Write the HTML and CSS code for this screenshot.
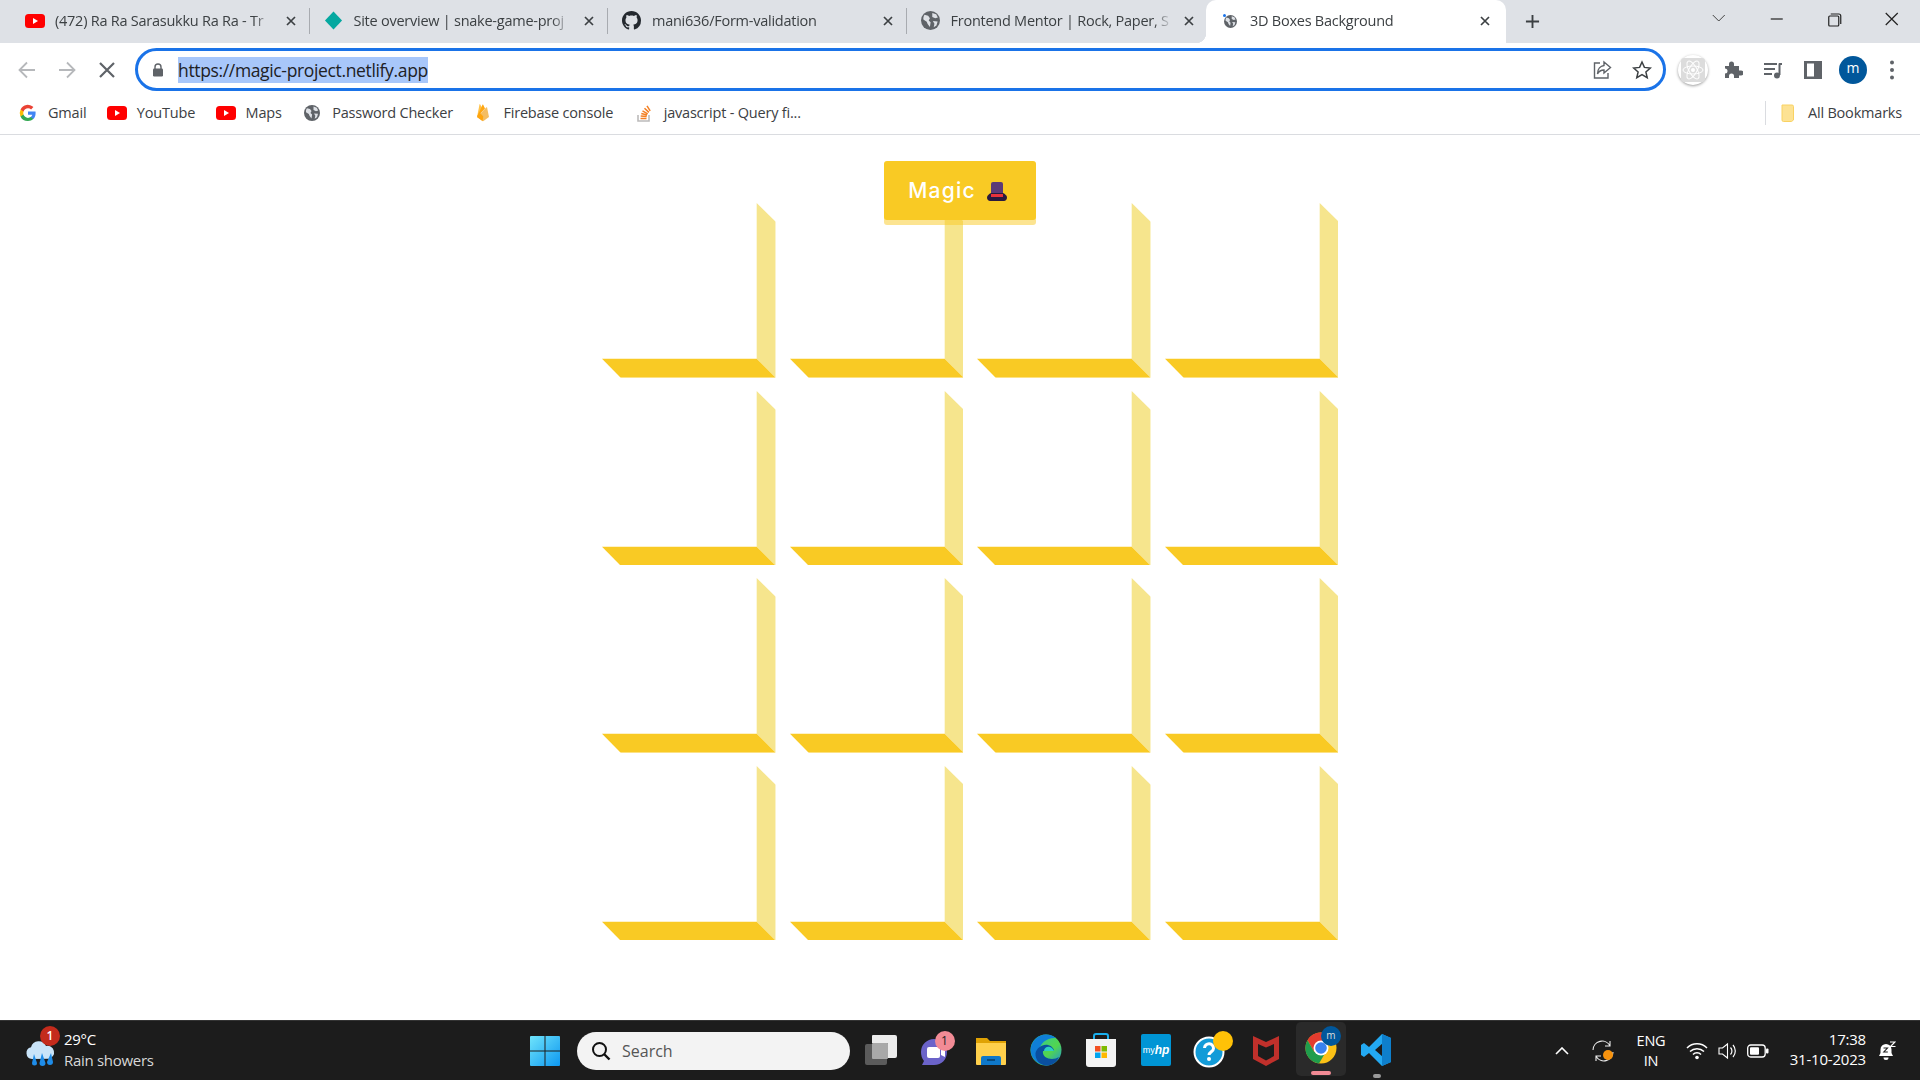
FILE: index.html
```html
<!DOCTYPE html>
<html lang="en">
<head>
<meta charset="utf-8">
<title>3D Boxes Background</title>
<link rel="stylesheet" href="styles.css">
</head>
<body>
<svg class="defs" width="0" height="0" aria-hidden="true">
  <symbol id="yt" viewBox="0 0 20 14"><rect width="20" height="14" rx="3.5" fill="#f00"/><path d="M8 4l5 3-5 3z" fill="#fff"/></symbol>
  <symbol id="globe" viewBox="0 0 16 16"><circle cx="8" cy="8" r="8" fill="#5f6368"/><path d="M3 3.2l3 .8 1.5 2-1 2 1.6 1.5-.6 4L5.6 11 4.8 9 2 7.2C1.800 5.600 2.200 4.300 3 3.200zM9.500 1.600l3.300 1.200 1.400 2.700-2.200.7L9.500 5zM10 8.500l4 .3-1 3.500-2.300 1.400.6-3z" fill="#dee1e6"/></symbol>
  <symbol id="close" viewBox="0 0 10 10"><path d="M1 1l8 8M9 1l-8 8" stroke="#3c4043" stroke-width="1.700" fill="none"/></symbol>
  <symbol id="box" viewBox="0 0 173.700 174.700"><path d="M154.700 0l19 18.700v156l-19-19z" fill="#f6e58d"/><path d="M0 155.700h154.700l19 19H18.700z" fill="#f9ca24"/></symbol>
</svg>

<div class="screen">
  <div class="tabstrip">
    <div class="tab"><svg class="fav-yt"><use href="#yt"/></svg><span class="tab-title">(472) Ra Ra Sarasukku Ra Ra - Tr</span><svg class="tab-x"><use href="#close"/></svg></div>
    <div class="tab"><svg class="fav" viewBox="0 0 20 20"><path d="M10 .5l9 9.500-9 9.500-9-9.500z" fill="#05a8a0"/></svg><span class="tab-title">Site overview | snake-game-proj</span><svg class="tab-x"><use href="#close"/></svg></div>
    <div class="tab"><svg class="fav" viewBox="0 0 16 16"><path fill="#24292f" d="M8 0C3.580 0 0 3.580 0 8c0 3.540 2.290 6.530 5.470 7.590.4.070.55-.17.55-.38 0-.19-.01-.82-.01-1.490-2.010.37-2.530-.49-2.690-.94-.09-.23-.48-.94-.82-1.130-.28-.15-.68-.52-.01-.53.63-.01 1.080.58 1.230.82.72 1.210 1.870.87 2.330.66.07-.52.28-.87.51-1.070-1.780-.2-3.640-.89-3.640-3.950 0-.87.31-1.590.82-2.150-.08-.2-.36-1.020.08-2.120 0 0 .67-.21 2.200.82.64-.18 1.320-.27 2-.27.68 0 1.360.09 2 .27 1.530-1.040 2.200-.82 2.200-.82.44 1.100.16 1.920.08 2.120.51.56.82 1.270.82 2.150 0 3.070-1.870 3.750-3.650 3.950.29.25.54.73.54 1.480 0 1.070-.01 1.930-.01 2.200 0 .21.15.46.55.38A8.013 8.013 0 0016 8c0-4.420-3.580-8-8-8z"/></svg><span class="tab-title">mani636/Form-validation</span><svg class="tab-x"><use href="#close"/></svg></div>
    <div class="tab tab-last"><svg class="fav"><use href="#globe"/></svg><span class="tab-title">Frontend Mentor | Rock, Paper, S</span><svg class="tab-x"><use href="#close"/></svg></div>
    <div class="tab tab-active"><svg class="fav-load" viewBox="0 0 16 16"><use href="#globe" x="2" y="2" width="13" height="13"/><circle cx="2.500" cy="2.500" r="1.500" fill="#1a73e8"/></svg><span class="tab-title">3D Boxes Background</span><svg class="tab-x"><use href="#close"/></svg></div>
    <svg class="newtab" viewBox="0 0 16 16"><path d="M8 1v14M1 8h14" stroke="#3c4043" stroke-width="2"/></svg>
    <div class="winctl">
      <svg class="winbtn" viewBox="0 0 46 24"><path d="M17 8l6 6 6-6" stroke="#444" fill="none"/></svg>
      <svg class="winbtn" viewBox="0 0 46 24"><path d="M17 12h12" stroke="#222" stroke-width="1.200"/></svg>
      <svg class="winbtn" viewBox="0 0 46 24"><path d="M19 9h8a1 1 0 011 1v8a1 1 0 01-1 1h-8a1 1 0 01-1-1v-8a1 1 0 011-1zM20 7h8a2 2 0 012 2v8" stroke="#222" fill="none" stroke-width="1.200"/></svg>
      <svg class="winbtn" viewBox="0 0 46 24"><path d="M17 6l12 12M29 6L17 18" stroke="#222" stroke-width="1.200"/></svg>
    </div>
  </div>

  <div class="toolbar">
    <svg class="tool" viewBox="0 0 40 40"><path d="M28 20H13M20 12.500L12.500 20l7.500 7.500" stroke="#b6b8bb" stroke-width="1.800" fill="none"/></svg>
    <svg class="tool" viewBox="0 0 40 40"><path d="M12 20h15M20 12.500l7.500 7.500-7.500 7.500" stroke="#b6b8bb" stroke-width="1.800" fill="none"/></svg>
    <svg class="tool" viewBox="0 0 40 40"><path d="M13 13l14 14M27 13L13 27" stroke="#5f6368" stroke-width="2.200"/></svg>
    <div class="urlbar">
      <svg class="lock" viewBox="0 0 12 14"><path d="M3 6V4a3 3 0 016 0v2" stroke="#5f6368" stroke-width="1.400" fill="none"/><rect x="1" y="5.500" width="10" height="8" rx="1.200" fill="#5f6368"/></svg>
      <span class="url">https://magic-project.netlify.app</span>
      <svg class="url-ico" viewBox="0 0 20 20"><path d="M8 3H2.500v15H16v-5" stroke="#5f6368" stroke-width="1.400" fill="none"/><path d="M12 2l6.500 5.500-6.500 5.500V10c-3 0-5 1-6.500 4 0-5 3-8 6.500-8.500z" stroke="#5f6368" stroke-width="1.400" fill="none"/></svg>
      <svg class="url-ico url-star" viewBox="0 0 20 20"><path d="M10 2l2.400 5.400 5.900.6-4.400 3.900 1.300 5.800L10 14.700l-5.200 3 1.300-5.800L1.700 8l5.900-.6z" stroke="#3c4043" stroke-width="1.500" fill="none"/></svg>
    </div>
    <div class="tool-cell"><div class="react-ext"><svg class="react-ico" viewBox="0 0 24 24" width="24" height="24"><g stroke="#fff" fill="none"><ellipse cx="12" cy="12" rx="10" ry="4"/><ellipse cx="12" cy="12" rx="10" ry="4" transform="rotate(60 12 12)"/><ellipse cx="12" cy="12" rx="10" ry="4" transform="rotate(120 12 12)"/></g><circle cx="12" cy="12" r="2" fill="#fff"/></svg></div></div>
    <div class="tool-cell"><svg viewBox="0 0 20 20" width="20" height="20"><path d="M2 7h4V5a2.500 2.500 0 015 0v2h5v4.500h2a2.500 2.500 0 010 5h-2V19H11v-2a2.500 2.500 0 00-5 0v2H2v-4.500a2.500 2.500 0 000-5z" fill="#5f6368" transform="translate(0 -1)"/></svg></div>
    <div class="tool-cell"><svg viewBox="0 0 20 20" width="20" height="20"><path d="M1 4h13M1 9h11M1 14h8" stroke="#5f6368" stroke-width="1.800"/><path d="M16.500 3.500V15" stroke="#5f6368" stroke-width="2"/><path d="M16 3h3v2h-3z" fill="#5f6368"/><circle cx="14" cy="15.500" r="3" fill="#5f6368"/></svg></div>
    <div class="tool-cell"><svg viewBox="0 0 18 20" width="18" height="20"><path d="M0 1h18v18H0zM3 3.500v13h7v-13z" fill="#5f6368" fill-rule="evenodd"/></svg></div>
    <div class="tool-cell"><div class="avatar">m</div></div>
    <svg class="tool tool-dots" viewBox="0 0 38 40"><g fill="#5f6368"><circle cx="19" cy="12.500" r="2"/><circle cx="19" cy="20" r="2"/><circle cx="19" cy="27.500" r="2"/></g></svg>
  </div>

  <div class="bookmarks">
    <div class="bm"><svg class="bm-ico" viewBox="0 0 20 20"><path d="M17.600 10.200c0-.6 0-1.100-.1-1.600H10v3.100h4.300a3.700 3.700 0 01-1.600 2.400v2h2.600c1.500-1.400 2.300-3.400 2.300-5.900z" fill="#4285f4"/><path d="M10 18c2.200 0 4-.7 5.300-1.900l-2.600-2c-.7.500-1.600.8-2.700.8-2.100 0-3.900-1.400-4.500-3.300H2.600v2.100A8 8 0 0010 18z" fill="#34a853"/><path d="M5.500 11.600a4.800 4.800 0 010-3.100V6.400H2.600a8 8 0 000 7.200z" fill="#fbbc05"/><path d="M10 5.200c1.200 0 2.300.4 3.100 1.200l2.300-2.300A8 8 0 002.600 6.400l2.900 2.100C6.100 6.600 7.900 5.200 10 5.200z" fill="#ea4335"/></svg><span>Gmail</span></div>
    <div class="bm"><svg class="bm-ico"><use href="#yt"/></svg><span>YouTube</span></div>
    <div class="bm"><svg class="bm-ico"><use href="#yt"/></svg><span>Maps</span></div>
    <div class="bm"><svg class="bm-ico bm-globe"><use href="#globe"/></svg><span>Password Checker</span></div>
    <div class="bm"><svg class="bm-ico" viewBox="0 0 20 20"><path d="M4 14L6.500 1.500c.1-.4.500-.4.700-.1L10 6.500z" fill="#ffc24a"/><path d="M4 14l8-8.500-1.800-3.700c-.2-.3-.6-.3-.7 0z" fill="#ffa712"/><path d="M4 14l9.500-9.700c.2-.2.600-.1.600.2L16 14l-5.500 4a1.200 1.200 0 01-1.100 0z" fill="#f4bd62"/><path d="M4 14l2.300-5 4 4.500-.8 4.500z" fill="#ffa50e"/></svg><span>Firebase console</span></div>
    <div class="bm"><svg class="bm-ico" viewBox="0 0 20 20"><path d="M4 12v6h11v-6" stroke="#bcbbbb" stroke-width="1.600" fill="none"/><path d="M6.500 15.500h6M6.700 13l6 .6M7.300 10.500l5.800 1.500M8.500 7.800l5.200 3M10.500 5.300l4.400 4.100M13 2.800l3.200 5" stroke="#f48024" stroke-width="1.500" fill="none"/></svg><span>javascript - Query fi...</span></div>
    <div class="bm-end">
      <div class="bm-sep"></div>
      <div class="bm bm-all"><svg class="bm-ico" viewBox="0 0 20 20"><path d="M4 2h10a1.500 1.500 0 011.500 1.500V17l-2 1.500H5.500A1.500 1.500 0 014 17z" fill="#fde293" stroke="#f9d262"/></svg><span>All Bookmarks</span></div>
    </div>
  </div>

  <main class="page">
    <button class="magic">Magic <svg class="hat" viewBox="0 0 20 19"><path d="M4 2a2 2 0 012-2h8a2 2 0 012 2v10H4z" fill="#5c3a77"/><path d="M0 15.500C0 13.500 2 12 4 11h12c2 1 4 2.500 4 4.500S18.500 19 17 19H3C1.500 19 0 17.500 0 15.500z" fill="#2a1a3e"/><path d="M4 12h12v3H4z" fill="#e8323c"/></svg></button>
    <div class="boxes">
      <svg class="box"><use href="#box"/></svg><svg class="box"><use href="#box"/></svg><svg class="box"><use href="#box"/></svg><svg class="box"><use href="#box"/></svg>
      <svg class="box"><use href="#box"/></svg><svg class="box"><use href="#box"/></svg><svg class="box"><use href="#box"/></svg><svg class="box"><use href="#box"/></svg>
      <svg class="box"><use href="#box"/></svg><svg class="box"><use href="#box"/></svg><svg class="box"><use href="#box"/></svg><svg class="box"><use href="#box"/></svg>
      <svg class="box"><use href="#box"/></svg><svg class="box"><use href="#box"/></svg><svg class="box"><use href="#box"/></svg><svg class="box"><use href="#box"/></svg>
    </div>
  </main>

  <footer class="taskbar">
    <div class="weather">
      <div class="weather-ico">
        <svg viewBox="0 0 32 28" width="32" height="28"><path d="M8 19a6 6 0 01-1-11.800A8 8 0 0122 6a6.500 6.500 0 013 12.800z" fill="#c9e4f9"/><path d="M10 14l3 9a2.500 2.500 0 01-5 0zM18 13l3.500 10a3 3 0 01-6 0zM27 13l2 9a3 3 0 01-6 0z" fill="#1e8ce8"/></svg>
        <span class="weather-badge">1</span>
      </div>
      <div class="weather-text"><span class="temp">29°C</span><span class="cond">Rain showers</span></div>
    </div>
    <svg class="winlogo" viewBox="0 0 30 30"><defs><linearGradient id="wl" x1="0" y1="0" x2="1" y2="1"><stop offset="0" stop-color="#6fe4fb"/><stop offset="1" stop-color="#0d97f0"/></linearGradient></defs><path d="M0 1a1 1 0 011-1h13.500v14.500H0zM15.500 0H29a1 1 0 011 1v13.500H15.500zM0 15.500h14.500V30H1a1 1 0 01-1-1zM15.500 15.500H30V29a1 1 0 01-1 1H15.500z" fill="url(#wl)"/></svg>
    <div class="search"><svg viewBox="0 0 20 20" width="20" height="20"><circle cx="8.500" cy="8.500" r="6.500" stroke="#111" stroke-width="2" fill="none"/><path d="M13 13l5.500 5.500" stroke="#111" stroke-width="2.400"/></svg><span>Search</span></div>
    <div class="task-icons">
      <div class="task"><svg viewBox="0 0 32 30" width="32" height="30"><rect x="0" y="9" width="22" height="21" rx="2" fill="#5b5b5b"/><rect x="7" y="8" width="16" height="16" rx="1" fill="#a9a9a9"/><path d="M7 1a1 1 0 011-1h22a2 2 0 012 2v19a2 2 0 01-2 2h-7V9a1 1 0 00-1-1H7z" fill="#ececec"/></svg></div>
      <div class="task"><svg viewBox="0 0 34 34" width="34" height="34"><path d="M15 6a13 13 0 0113 13c0 7-5 13-13 13H3l2-4a14 14 0 01-3-9A13 13 0 0115 6z" fill="#6b63c9"/><rect x="8" y="14" width="13" height="11" rx="2" fill="#fff"/><path d="M22 17l4-2v9l-4-2z" fill="#fff"/></svg><span class="task-badge">1</span></div>
      <div class="task"><svg viewBox="0 0 30 30" width="30" height="30"><path d="M0 3h11l3 3h16v3H0z" fill="#e0a204"/><path d="M0 8h30v21a1 1 0 01-1 1H1a1 1 0 01-1-1z" fill="#ffd04c"/><path d="M5 23a2 2 0 012-2h16a2 2 0 012 2v7H5z" fill="#0f78c9"/><path d="M11 25h8" stroke="#06385f" stroke-width="1.400"/></svg></div>
      <div class="task"><svg viewBox="0 0 32 32" width="32" height="32"><defs><linearGradient id="ed" x1="0" y1="0" x2="1" y2="1"><stop offset="0" stop-color="#2fc5a4"/><stop offset=".6" stop-color="#52d64e"/><stop offset="1" stop-color="#1a8fe0"/></linearGradient></defs><circle cx="16" cy="16" r="15.500" fill="url(#ed)"/><path d="M.6 16C1 7 8 .5 16 .5c6 0 10 3.500 10 3.500C18 3 8 9 9 20c.5 6 5 10 11 11-9 2-19-4-19.400-15z" fill="#0f7fd6"/><path d="M16 31.500C10 31 5 26 5.500 19 7 14 12 10 18 11c4 1 6 4 6 6H13c-1 5 4 8 9 8 3 0 5-1 7-2-2 5-7 8.500-13 8.500z" fill="#0a4f9f"/><path d="M14 17c0-3 3-5 6-4s4 4 4 4z" fill="#2dcfc2"/></svg></div>
      <div class="task"><svg viewBox="0 0 30 34" width="30" height="34"><path d="M8 6V3a2 2 0 012-2h10a2 2 0 012 2v3" stroke="#1ab0ef" stroke-width="2" fill="none"/><path d="M0 6h30v25a3 3 0 01-3 3H3a3 3 0 01-3-3z" fill="#f3f3f3"/><path d="M9 13h5.500v5.500H9z" fill="#f25022"/><path d="M15.500 13H21v5.500h-5.500z" fill="#7fba00"/><path d="M9 19.500h5.500V25H9z" fill="#00a4ef"/><path d="M15.500 19.500H21V25h-5.500z" fill="#ffb900"/></svg></div>
      <div class="task"><div class="myhp"><span>my</span><b>hp</b></div></div>
      <div class="task"><svg viewBox="0 0 36 36" width="36" height="36"><circle cx="16" cy="20" r="14.500" fill="#129bd8" stroke="#fff" stroke-width="2"/><path d="M11.500 16a4.500 4.500 0 119 .5c0 3-4.500 3.500-4.500 6.500" stroke="#fff" stroke-width="3" fill="none"/><circle cx="16" cy="27" r="2" fill="#fff"/></svg><span class="task-dot"></span></div>
      <div class="task"><svg viewBox="0 0 26 32" width="26" height="32"><path d="M0 2l13 6 13-6v23l-13 7-13-7zM5 10v12l8 4.500 8-4.500V10l-8 3.500z" fill="#c0302b" fill-rule="evenodd"/></svg></div>
      <div class="task task-on"><svg viewBox="0 0 32 32" width="32" height="32"><circle cx="16" cy="16" r="15.500" fill="#fbc116"/><path d="M16 .5A15.500 15.500 0 002.500 8.200L9.300 20 16 10h13.500A15.500 15.500 0 0016 .5z" fill="#e33b2e"/><path d="M2.500 8.200A15.500 15.500 0 0014 31.400L20.800 20 9.300 20z" fill="#1f9d4d"/><circle cx="16" cy="16" r="7.500" fill="#fff"/><circle cx="16" cy="16" r="5.800" fill="#3a82ee"/></svg><span class="chrome-av">m</span><span class="run-pink"></span></div>
      <div class="task"><svg viewBox="0 0 30 32" width="30" height="32"><path d="M21 0l9 4v24l-9 4-13-13-5 4-3-2v-10l3-2 5 4zM22 9l-8 7 8 7z" fill="#23a9f2" fill-rule="evenodd"/><path d="M21 0l9 4v24l-9 4z" fill="#0e7fcc"/></svg><span class="run-grey"></span></div>
    </div>
    <div class="tray">
      <div class="tray-cell w36"><svg viewBox="0 0 14 8" width="14" height="8"><path d="M1 7l6-6 6 6" stroke="#fff" stroke-width="1.600" fill="none"/></svg></div>
      <div class="tray-cell w46 sync"><svg viewBox="0 0 22 22" width="22" height="22"><path d="M1 10a9 9 0 0117-4M18 1v5h-5M21 12a9 9 0 01-17 4M4 21v-5h5" stroke="#eee" stroke-width="1.100" fill="none"/><circle cx="16" cy="15" r="5" fill="#f7930e"/></svg></div>
      <div class="tray-cell w50 lang"><span>ENG</span><span>IN</span></div>
      <div class="tray-cell w42"><svg viewBox="0 0 22 18" width="22" height="18"><path d="M1 6a14 14 0 0120 0M4 9.500a10 10 0 0114 0M7 12.500a5.500 5.500 0 018 0" stroke="#fff" stroke-width="1.500" fill="none"/><circle cx="11" cy="15.500" r="1.800" fill="#fff"/></svg></div>
      <div class="tray-cell w20"><svg viewBox="0 0 20 18" width="20" height="18"><path d="M1 6h3.500L9.500 2v14l-5-4H1z" stroke="#fff" stroke-width="1.100" fill="none"/><path d="M12.500 5.500a5 5 0 010 7M15 3a9 9 0 010 12" stroke="#fff" stroke-width="1.200" fill="none"/></svg></div>
      <div class="tray-cell w40"><svg viewBox="0 0 22 14" width="22" height="14"><rect x=".7" y="1" width="17.500" height="12" rx="3" stroke="#fff" stroke-width="1.300" fill="none"/><rect x="3" y="3.300" width="9" height="7.400" rx="1" fill="#fff"/><rect x="19" y="4.500" width="2.500" height="5" rx="1" fill="#fff"/></svg></div>
      <div class="clock"><span>17:38</span><span>31-10-2023</span></div>
      <div class="tray-cell w42"><svg viewBox="0 0 18 20" width="18" height="20"><path d="M8 3a5.500 5.500 0 00-5.500 5.500V12L1 15h14l-1.500-3V8.500A5.500 5.500 0 008 3z" fill="#fff"/><path d="M5.500 16.500h5a2.500 2.500 0 01-5 0z" fill="#fff"/><path d="M5.500 7h4L5.800 11h4" stroke="#1c1c1c" stroke-width="1.100" fill="none"/><path d="M12 1h5l-4.500 4.500h5" stroke="#fff" stroke-width="1.200" fill="none"/></svg></div>
    </div>
  </footer>
</div>
</body>
</html>
```
FILE: styles.css
```css
* { box-sizing: border-box; }
html, body { margin: 0; padding: 0; height: 100%; overflow: hidden; }
body { font-family: "Open Sans", "Noto Sans", sans-serif; background: #fff; color: #3c4043; }
.defs { position: absolute; }
svg { display: block; flex: none; }

.screen { display: flex; flex-direction: column; height: 1080px; width: 1920px; }

/* Tab strip */
.tabstrip { display: flex; align-items: stretch; height: 43px; background: #dee1e6; padding-left: 11px; flex: none; }
.tab { position: relative; width: 298.5px; display: flex; align-items: center; padding: 0 14px 2px 14px; font-size: 14.500px; letter-spacing: -.25px; color: #3c4043; }
.tab::after { content: ""; position: absolute; right: 0; top: 8px; height: 26px; width: 1px; background: #a8abb0; }
.tab-last { width: 299.5px; padding-right: 12px; }
.tab-last::after { display: none; }
.tab-last .tab-x { margin-left: 12px; }
.tab-active { width: 300px; background: #fff; border-radius: 10px 10px 0 0; padding-left: 16px; padding-right: 16px; }
.tab-active::after { display: none; }
.tab-active::before { content: ""; position: absolute; left: -10px; bottom: 0; width: 10px; height: 10px; background: radial-gradient(circle at 0 0, transparent 10px, #fff 10.500px); }
.fav-yt { width: 20px; height: 14px; margin-right: 10px; }
.fav { width: 19px; height: 19px; margin-right: 11px; }
.fav-load { width: 16px; height: 16px; margin-right: 12px; }
.tab-title { flex: 1; min-width: 0; white-space: nowrap; overflow: hidden; -webkit-mask-image: linear-gradient(90deg, #000 calc(100% - 18px), transparent); mask-image: linear-gradient(90deg, #000 calc(100% - 18px), transparent); }
.tab-x { width: 10px; height: 10px; margin-left: 14px; }
.newtab { width: 15px; height: 15px; margin: 14px 0 0 19px; }
.winctl { display: flex; margin-left: auto; }
.winbtn { width: 57.500px; height: 24px; margin-top: 7px; }

/* Toolbar */
.toolbar { display: flex; align-items: center; height: 52px; padding: 1px 9px 0 7px; background: #fff; flex: none; }
.tool { width: 40px; height: 40px; }
.tool-dots { width: 38px; }
.urlbar { flex: 1; height: 43px; margin-left: 8px; margin-right: 7px; border: 3px solid #1a73e8; border-radius: 22px; display: flex; align-items: center; padding: 0 11px 0 11px; }
.lock { width: 12px; height: 14px; margin-left: 3px; }
.url { margin-left: 14px; background: #a8c7fa; color: #202124; font-size: 17.500px; line-height: 26px; letter-spacing: -.35px; white-space: nowrap; }
.url-ico { width: 20px; height: 20px; margin-left: auto; }
.url-star { margin-left: 20px; }
.tool-cell { width: 40px; display: flex; justify-content: center; align-items: center; }
.react-ext { width: 30px; height: 30px; border-radius: 50%; background: #fff; box-shadow: 0 1px 3px rgba(0,0,0,.4); display: flex; align-items: center; justify-content: center; }
.react-ico { background: #dcdcdc; border-radius: 3px; }
.avatar { width: 28px; height: 28px; border-radius: 50%; background: #01579b; color: #fff; font-size: 14px; display: flex; align-items: center; justify-content: center; line-height: 1; padding-bottom: 3px; }

/* Bookmarks */
.bookmarks { display: flex; align-items: center; height: 40px; padding: 0 18px 4px 18px; gap: 20.500px; background: #fff; border-bottom: 1px solid #dadce0; font-size: 14.500px; letter-spacing: -.2px; color: #3c4043; flex: none; }
.bm { display: flex; align-items: center; gap: 10px; white-space: nowrap; }
.bm-ico { width: 20px; height: 20px; }
.bm-globe { padding: 2px; }
.bm-end { margin-left: auto; display: flex; align-items: center; gap: 12px; }
.bm-sep { width: 1px; height: 24px; background: #dadce0; }
.bm-all { gap: 10px; }

/* Page */
.page { flex: 1; min-height: 0; display: flex; flex-direction: column; align-items: center; padding-top: 26px; background: #fff; }
.magic { position: relative; z-index: 2; width: 152px; height: 59px; padding: 0 5px 0 0; border: 0; border-radius: 3px; background: #f9ca24; box-shadow: 0 5px 0 rgba(249,202,36,.5); color: #fff; font-family: "Inter", sans-serif; font-size: 21px; font-weight: 500; letter-spacing: 1.2px; display: flex; align-items: center; justify-content: center; gap: 11px; }
.hat { width: 20px; height: 19px; margin-top: 2px; }
.boxes { display: grid; grid-template-columns: repeat(4, 187.500px); grid-auto-rows: 187.500px; margin: -17px 0 0 20.500px; width: 736px; }
.box { width: 173.700px; height: 174.700px; }

/* Taskbar */
.taskbar { display: flex; align-items: center; height: 60px; background: #1c1c1c; border-top: 1px solid #333; color: #fff; flex: none; }
.weather { width: 530px; padding-left: 24px; display: flex; align-items: center; gap: 8px; }
.weather-ico { position: relative; width: 32px; height: 28px; margin-top: 6px; }
.weather-badge { position: absolute; left: 16px; top: -14px; width: 20px; height: 20px; border-radius: 50%; background: #c42b1c; color: #fff; font-size: 12px; font-weight: 600; display: flex; align-items: center; justify-content: center; }
.weather-text { display: flex; flex-direction: column; font-size: 15px; line-height: 20.500px; letter-spacing: -.3px; padding-bottom: 2px; }
.cond { color: #d8d8d8; }
.winlogo { width: 30px; height: 30px; }
.search { width: 273px; height: 38px; margin-left: 17px; border-radius: 19px; background: #f3f3f3; color: #555; font-size: 16px; display: flex; align-items: center; gap: 11px; padding-left: 14px; }
.task-icons { display: flex; margin-left: 3.500px; }
.task { position: relative; width: 55px; height: 58px; display: flex; align-items: center; justify-content: center; padding-bottom: 2px; }
.task-on { background: #2a2a2a; border-radius: 5px; height: 54px; width: 50px; margin: 0 2.500px; }
.task-badge { position: absolute; right: 9px; top: 9px; width: 20px; height: 20px; border-radius: 50%; background: #f28b95; color: #222; font-size: 12px; display: flex; align-items: center; justify-content: center; }
.task-dot { position: absolute; right: 6px; top: 9px; width: 20px; height: 20px; border-radius: 50%; background: #ffc107; }
.myhp { width: 30px; height: 32px; border-radius: 2px; background: #0095d5; color: #fff; display: flex; align-items: center; justify-content: center; font-size: 9px; font-family: "Liberation Sans", sans-serif; font-style: italic; }
.myhp span { font-style: normal; }
.myhp b { font-size: 12px; }
.chrome-av { position: absolute; right: 5px; top: 4px; width: 20px; height: 20px; border-radius: 50%; background: #01579b; color: #ddd; font-size: 10px; display: flex; align-items: center; justify-content: center; padding-bottom: 2px; }
.run-pink { position: absolute; bottom: 1px; left: 15px; width: 20px; height: 4px; border-radius: 2px; background: #f28b95; }
.run-grey { position: absolute; bottom: 2px; left: 24px; width: 8px; height: 4px; border-radius: 2px; background: #999; }
.tray { margin-left: auto; display: flex; align-items: center; padding-right: 12px; }
.tray-cell { display: flex; align-items: center; justify-content: center; }
.w36 { width: 36px; } .w46 { width: 46px; } .w50 { width: 50px; } .w42 { width: 42px; } .w20 { width: 20px; } .w40 { width: 40px; }
.lang, .clock { flex-direction: column; font-size: 14.500px; line-height: 20px; letter-spacing: -.2px; }
.clock { width: 88px; display: flex; align-items: flex-end; padding-bottom: 2px; font-size: 15px; line-height: 19.500px; }
.clock span { white-space: nowrap; }
```
